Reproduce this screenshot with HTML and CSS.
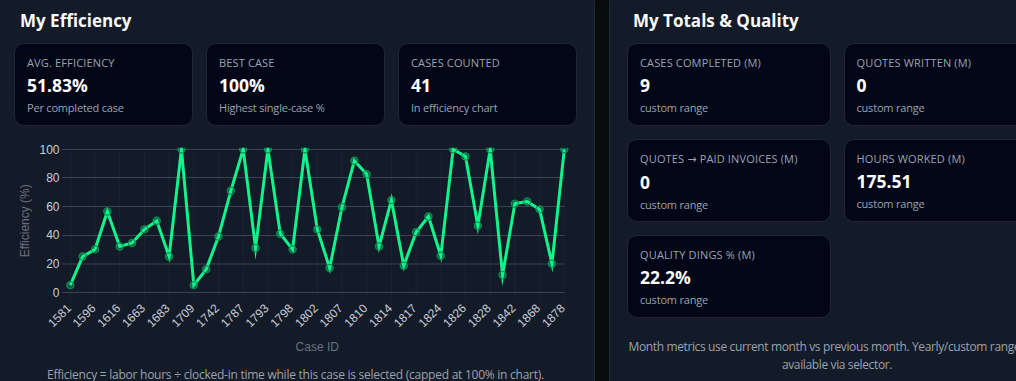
FILE: index.html
```html
<!DOCTYPE html>
<html lang="en">
<head>
<meta charset="utf-8">
<title>My Efficiency</title>
<link rel="stylesheet" href="styles.css">
</head>
<body>
<div class="page">
  <section class="panel panel-eff">
    <h2 class="panel-title">My Efficiency</h2>
    <div class="cards cards-3">
      <div class="card">
        <div class="card-label">Avg. Efficiency</div>
        <div class="card-value">51.83%</div>
        <div class="card-sub">Per completed case</div>
      </div>
      <div class="card">
        <div class="card-label">Best Case</div>
        <div class="card-value">100%</div>
        <div class="card-sub">Highest single-case %</div>
      </div>
      <div class="card">
        <div class="card-label">Cases Counted</div>
        <div class="card-value">41</div>
        <div class="card-sub">In efficiency chart</div>
      </div>
    </div>
    <svg class="chart" width="563" height="232" viewBox="14 130 563 232" xmlns="http://www.w3.org/2000/svg">
      <defs>
        <clipPath id="area"><rect x="14" y="147.8" width="563" height="214"/></clipPath>
      </defs>
      <g class="vgrid" stroke="rgba(255,255,255,0.045)" stroke-width="1">
        <line x1="70.5" y1="149" x2="70.5" y2="300"/>
        <line x1="95" y1="149" x2="95" y2="300"/>
        <line x1="119.7" y1="149" x2="119.7" y2="300"/>
        <line x1="144.4" y1="149" x2="144.4" y2="300"/>
        <line x1="169.1" y1="149" x2="169.1" y2="300"/>
        <line x1="193.8" y1="149" x2="193.8" y2="300"/>
        <line x1="218.5" y1="149" x2="218.5" y2="300"/>
        <line x1="243.2" y1="149" x2="243.2" y2="300"/>
        <line x1="267.9" y1="149" x2="267.9" y2="300"/>
        <line x1="292.6" y1="149" x2="292.6" y2="300"/>
        <line x1="317.3" y1="149" x2="317.3" y2="300"/>
        <line x1="342" y1="149" x2="342" y2="300"/>
        <line x1="366.7" y1="149" x2="366.7" y2="300"/>
        <line x1="391.4" y1="149" x2="391.4" y2="300"/>
        <line x1="416.1" y1="149" x2="416.1" y2="300"/>
        <line x1="440.8" y1="149" x2="440.8" y2="300"/>
        <line x1="465.5" y1="149" x2="465.5" y2="300"/>
        <line x1="490.2" y1="149" x2="490.2" y2="300"/>
        <line x1="514.9" y1="149" x2="514.9" y2="300"/>
        <line x1="539.6" y1="149" x2="539.6" y2="300"/>
        <line x1="564.3" y1="149" x2="564.3" y2="300"/>
      </g>
      <g class="hgrid" stroke="#3a4352" stroke-width="1">
        <line x1="62" y1="149.5" x2="564.5" y2="149.5"/>
        <line x1="62" y1="177.5" x2="564.5" y2="177.5"/>
        <line x1="62" y1="206.5" x2="564.5" y2="206.5"/>
        <line x1="62" y1="235.5" x2="564.5" y2="235.5"/>
        <line x1="62" y1="264" x2="564.5" y2="264"/>
        <line x1="62" y1="292.5" x2="564.5" y2="292.5"/>
      </g>
      <g class="yticks" fill="#c9ced6" font-family="'Liberation Sans', Arial, sans-serif" font-size="12" text-anchor="end">
        <text x="59.5" y="153.6">100</text>
        <text x="59.5" y="182.2">80</text>
        <text x="59.5" y="210.8">60</text>
        <text x="59.5" y="239.4">40</text>
        <text x="59.5" y="268">20</text>
        <text x="59.5" y="296.6">0</text>
      </g>
      <text class="axis-title" x="29" y="220.8" transform="rotate(-90 29 220.8)" fill="#6b7280" font-family="'Liberation Sans', Arial, sans-serif" font-size="12" text-anchor="middle">Efficiency (%)</text>
      <g class="xticks" fill="#c9ced6" font-family="'Liberation Sans', Arial, sans-serif" font-size="12" text-anchor="end">
        <text x="72" y="309" transform="rotate(-45 72 309)">1581</text>
        <text x="96.5" y="309" transform="rotate(-45 96.5 309)">1596</text>
        <text x="121.2" y="309" transform="rotate(-45 121.2 309)">1616</text>
        <text x="145.9" y="309" transform="rotate(-45 145.9 309)">1663</text>
        <text x="170.6" y="309" transform="rotate(-45 170.6 309)">1683</text>
        <text x="195.3" y="309" transform="rotate(-45 195.3 309)">1709</text>
        <text x="220" y="309" transform="rotate(-45 220 309)">1742</text>
        <text x="244.7" y="309" transform="rotate(-45 244.7 309)">1787</text>
        <text x="269.4" y="309" transform="rotate(-45 269.4 309)">1793</text>
        <text x="294.1" y="309" transform="rotate(-45 294.1 309)">1798</text>
        <text x="318.8" y="309" transform="rotate(-45 318.8 309)">1802</text>
        <text x="343.5" y="309" transform="rotate(-45 343.5 309)">1807</text>
        <text x="368.2" y="309" transform="rotate(-45 368.2 309)">1810</text>
        <text x="392.9" y="309" transform="rotate(-45 392.9 309)">1814</text>
        <text x="417.6" y="309" transform="rotate(-45 417.6 309)">1817</text>
        <text x="442.3" y="309" transform="rotate(-45 442.3 309)">1824</text>
        <text x="467" y="309" transform="rotate(-45 467 309)">1826</text>
        <text x="491.7" y="309" transform="rotate(-45 491.7 309)">1828</text>
        <text x="516.4" y="309" transform="rotate(-45 516.4 309)">1842</text>
        <text x="541.1" y="309" transform="rotate(-45 541.1 309)">1868</text>
        <text x="565.8" y="309" transform="rotate(-45 565.8 309)">1878</text>
      </g>
      <text class="axis-title" x="317.3" y="350.7" fill="#6b7280" font-family="'Liberation Sans', Arial, sans-serif" font-size="12" text-anchor="middle">Case ID</text>
      <g clip-path="url(#area)">
        <polyline fill="none" stroke="#10f58b" stroke-width="3" stroke-linejoin="miter" stroke-miterlimit="10"
          points="70.3,285.15 82.65,256.55 95,249.4 107.35,211.5 119.7,246.54 132.05,243 144.4,229.4 156.75,220.8 169.1,256.55 181.45,149.3 193.8,285.15 206.15,269.4 218.5,236.5 230.85,190.8 243.2,149.3 255.55,248 267.9,149.3 280.25,233.7 292.6,249.4 304.95,149.3 317.3,229.4 329.65,268 342,207.2 354.35,160.7 366.7,174.3 379.05,246.54 391.4,200.1 403.75,265.8 416.1,232.2 428.45,216.5 440.8,255.8 453.15,149.3 465.5,156.45 477.85,225.8 490.2,149.3 502.55,275.1 514.9,203.6 527.25,201.5 539.6,209.4 551.95,263.7 564.3,149.3"/>
        <g fill="rgba(16,245,139,0.3)" stroke="#0b8f54" stroke-width="1.2">
          <circle cx="70.3" cy="285.15" r="3.6"/><circle cx="82.65" cy="256.55" r="3.6"/><circle cx="95" cy="249.4" r="3.6"/>
          <circle cx="107.35" cy="211.5" r="3.6"/><circle cx="119.7" cy="246.54" r="3.6"/><circle cx="132.05" cy="243" r="3.6"/>
          <circle cx="144.4" cy="229.4" r="3.6"/><circle cx="156.75" cy="220.8" r="3.6"/><circle cx="169.1" cy="256.55" r="3.6"/>
          <circle cx="181.45" cy="149.3" r="3.6"/><circle cx="193.8" cy="285.15" r="3.6"/><circle cx="206.15" cy="269.4" r="3.6"/>
          <circle cx="218.5" cy="236.5" r="3.6"/><circle cx="230.85" cy="190.8" r="3.6"/><circle cx="243.2" cy="149.3" r="3.6"/>
          <circle cx="255.55" cy="248" r="3.6"/><circle cx="267.9" cy="149.3" r="3.6"/><circle cx="280.25" cy="233.7" r="3.6"/>
          <circle cx="292.6" cy="249.4" r="3.6"/><circle cx="304.95" cy="149.3" r="3.6"/><circle cx="317.3" cy="229.4" r="3.6"/>
          <circle cx="329.65" cy="268" r="3.6"/><circle cx="342" cy="207.2" r="3.6"/><circle cx="354.35" cy="160.7" r="3.6"/>
          <circle cx="366.7" cy="174.3" r="3.6"/><circle cx="379.05" cy="246.54" r="3.6"/><circle cx="391.4" cy="200.1" r="3.6"/>
          <circle cx="403.75" cy="265.8" r="3.6"/><circle cx="416.1" cy="232.2" r="3.6"/><circle cx="428.45" cy="216.5" r="3.6"/>
          <circle cx="440.8" cy="255.8" r="3.6"/><circle cx="453.15" cy="149.3" r="3.6"/><circle cx="465.5" cy="156.45" r="3.6"/>
          <circle cx="477.85" cy="225.8" r="3.6"/><circle cx="490.2" cy="149.3" r="3.6"/><circle cx="502.55" cy="275.1" r="3.6"/>
          <circle cx="514.9" cy="203.6" r="3.6"/><circle cx="527.25" cy="201.5" r="3.6"/><circle cx="539.6" cy="209.4" r="3.6"/>
          <circle cx="551.95" cy="263.7" r="3.6"/><circle cx="564.3" cy="149.3" r="3.6"/>
        </g>
      </g>
    </svg>
    <p class="note">Efficiency = labor hours ÷ clocked-in time while this case is selected (capped at 100% in chart).</p>
  </section>

  <section class="panel panel-totals">
    <h2 class="panel-title">My Totals &amp; Quality</h2>
    <div class="cards cards-2">
      <div class="card">
        <div class="card-label">Cases Completed (M)</div>
        <div class="card-value">9</div>
        <div class="card-sub">custom range</div>
      </div>
      <div class="card">
        <div class="card-label">Quotes Written (M)</div>
        <div class="card-value">0</div>
        <div class="card-sub">custom range</div>
      </div>
      <div class="card">
        <div class="card-label">Quotes <span class="arrow">→</span> Paid Invoices (M)</div>
        <div class="card-value">0</div>
        <div class="card-sub">custom range</div>
      </div>
      <div class="card">
        <div class="card-label">Hours Worked (M)</div>
        <div class="card-value">175.51</div>
        <div class="card-sub">custom range</div>
      </div>
      <div class="card">
        <div class="card-label">Quality Dings % (M)</div>
        <div class="card-value">22.2%</div>
        <div class="card-sub">custom range</div>
      </div>
    </div>
    <p class="note note-totals">Month metrics use current month vs previous month. Yearly/custom ranges are available via selector.</p>
  </section>
</div>
</body>
</html>
```

FILE: styles.css
```css
* { box-sizing: border-box; }

html, body {
  margin: 0;
  padding: 0;
  background: #0a0b0d;
  overflow: hidden;
}

body {
  font-family: "Open Sans", "Noto Sans", Arial, sans-serif;
  color: #f3f4f6;
  width: 1016px;
  height: 381px;
}

.page {
  display: flex;
  align-items: flex-start;
  gap: 14px;
  margin: -9px 0 0 -4px;
  width: 1100px;
}

.panel {
  flex: none;
  background: #131a28;
  border: 1px solid #1f2937;
  border-radius: 12px;
  padding: 17px;
  height: 420px;
}

.panel-eff { width: 599px; }
.panel-totals { width: 456px; }

.panel-title {
  margin: 0 0 10px 6px;
  font-size: 17px;
  line-height: 24px;
  font-weight: 700;
  color: #f9fafb;
}

.cards {
  display: grid;
  gap: 13px;
}

.cards-3 { grid-template-columns: repeat(3, 1fr); }
.cards-2 { grid-template-columns: repeat(2, 1fr); }

.card {
  background: #020617;
  border: 1px solid #1e2635;
  border-radius: 10px;
  padding: 11px 12px 9px;
  height: 83px;
}

.card-label {
  font-size: 11px;
  line-height: 16px;
  text-transform: uppercase;
  letter-spacing: 0.15px;
  color: #9ca3af;
  white-space: nowrap;
}

.arrow {
  font-family: "DejaVu Sans", sans-serif;
  font-size: 11px;
}

.card-value {
  margin-top: 3px;
  font-size: 17.5px;
  line-height: 22px;
  font-weight: 700;
  color: #ffffff;
}

.card-sub {
  margin-top: 4px;
  font-size: 11px;
  line-height: 16px;
  letter-spacing: -0.2px;
  color: #9ca3af;
}

.chart {
  display: block;
  margin-top: 4px;
}

.note {
  margin: 4px 0 0;
  text-align: center;
  font-size: 12px;
  line-height: 18px;
  letter-spacing: -0.25px;
  color: #9ca3af;
}

.note-totals {
  margin-top: 20px;
  letter-spacing: -0.37px;
}
```
